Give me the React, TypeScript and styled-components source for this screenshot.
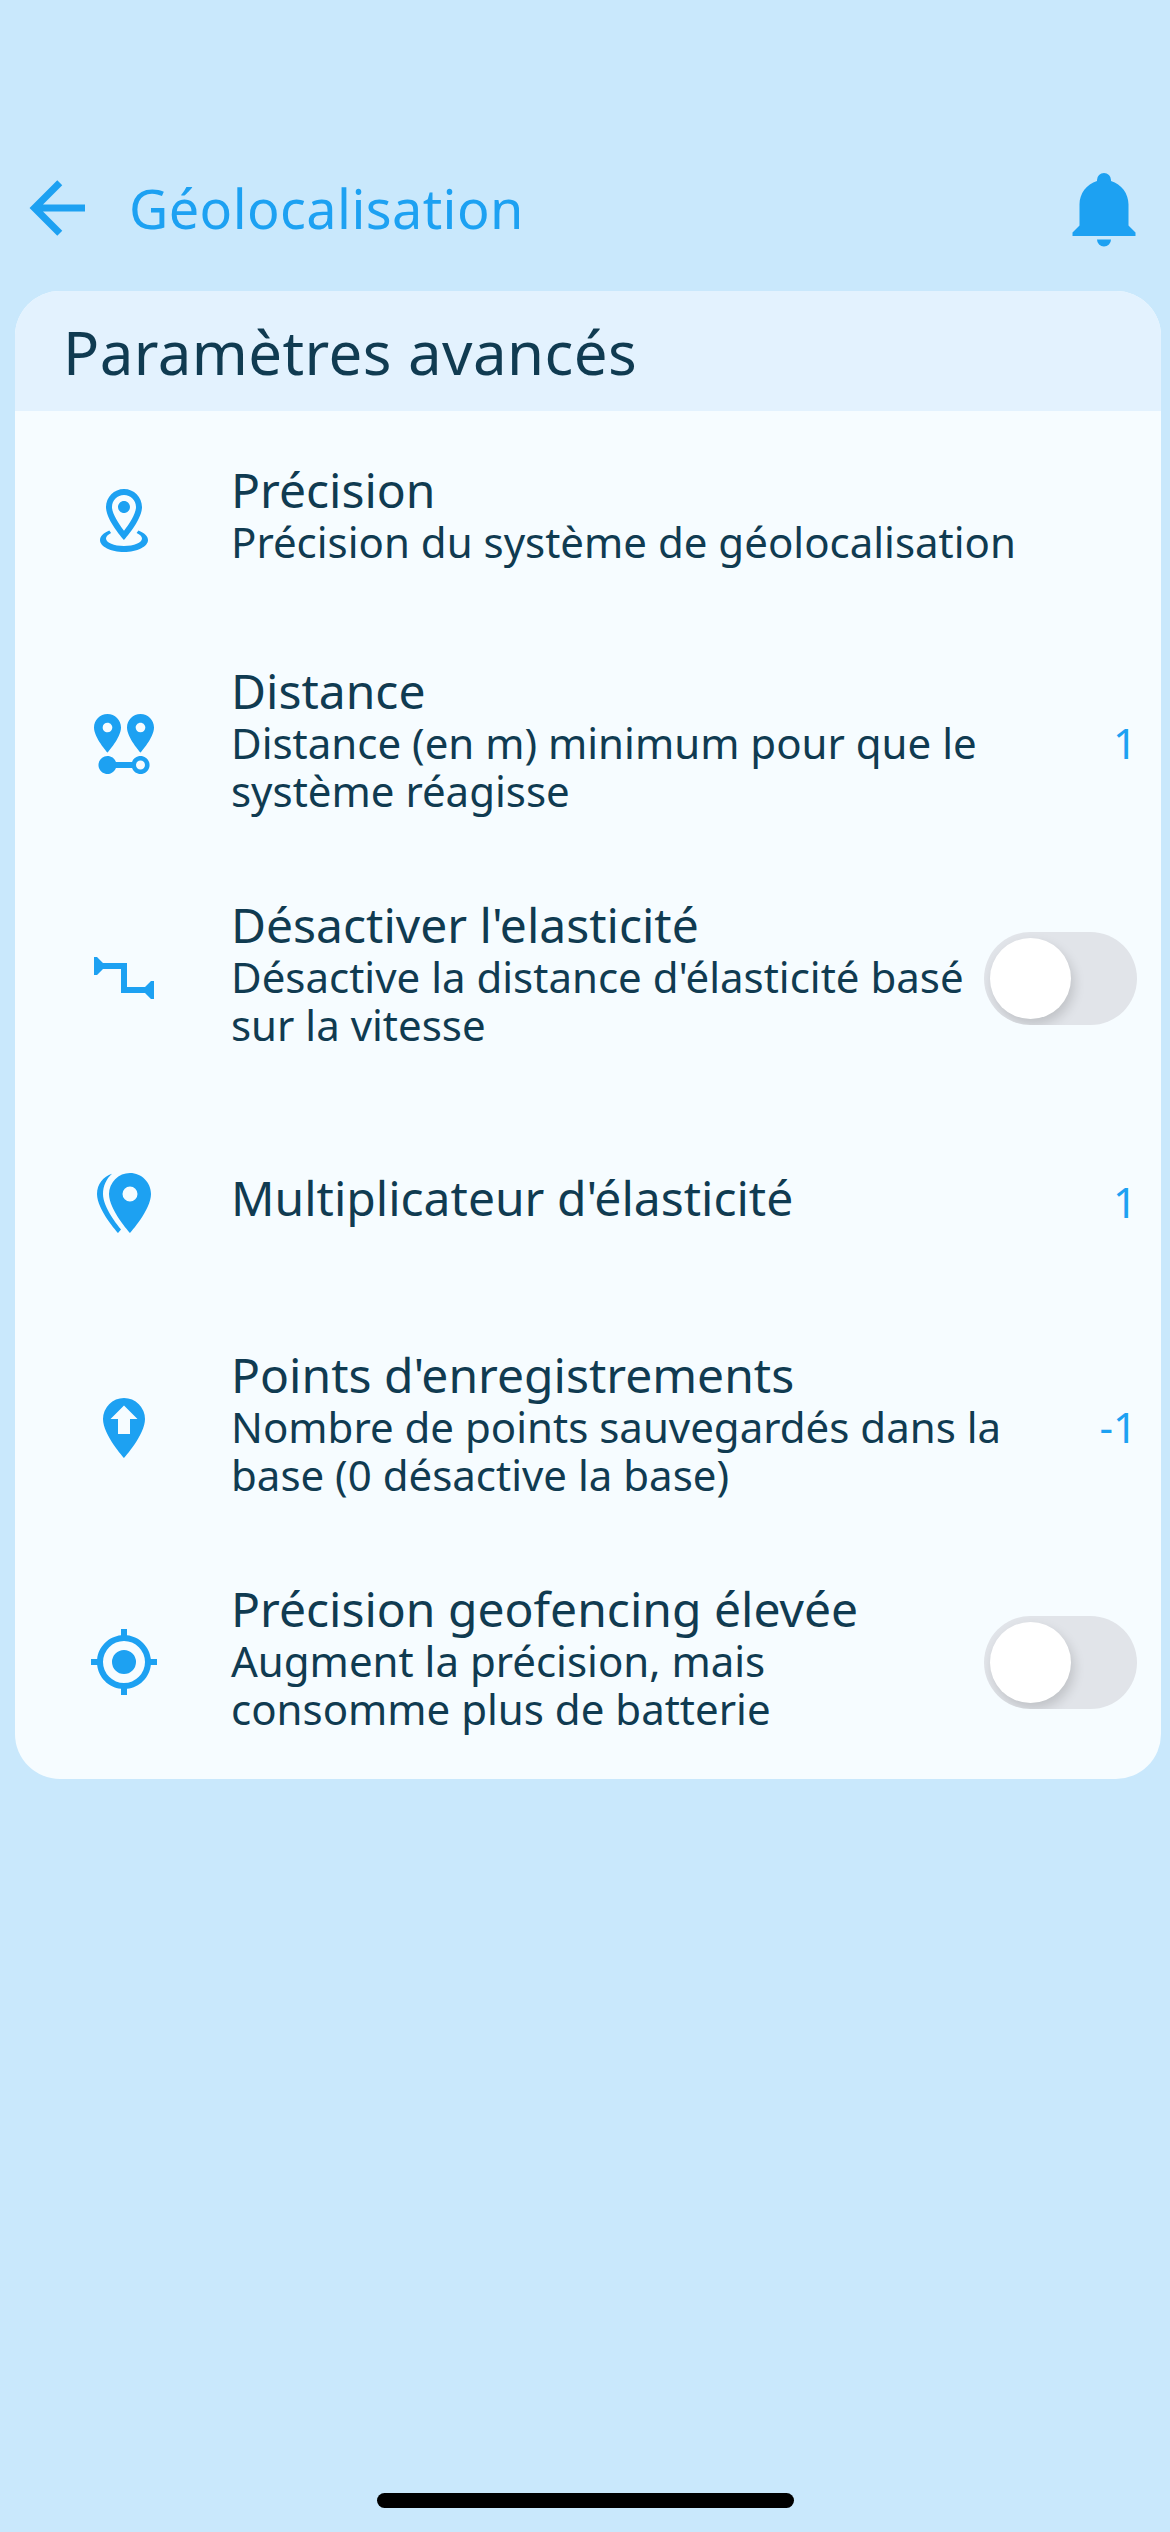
import React from "react";
import styled, { createGlobalStyle } from "styled-components";

const blue = "#1da1f2";
const ink = "#103b51";

const GlobalStyle = createGlobalStyle`
  * { box-sizing: border-box; }
  body { margin: 0; background: #c9e8fc; }
`;

const Screen = styled.div`
  width: 1170px;
  height: 2532px;
  background: #c9e8fc;
  display: flex;
  flex-direction: column;
  font-family: "Noto Sans", "Open Sans", sans-serif;
  color: ${ink};
  overflow: hidden;
`;

const TopBar = styled.header`
  display: flex;
  align-items: center;
  height: 166px;
  margin-top: 125px;
  padding: 0 24px 0 15px;
`;

const Title = styled.h1`
  flex: 1;
  margin: 0 0 0 30px;
  font-size: 54px;
  line-height: 74px;
  font-weight: 400;
  letter-spacing: 0.4px;
  color: ${blue};
`;

const Icon = styled.svg<{ $size: number }>`
  flex: none;
  width: ${(p) => p.$size}px;
  height: ${(p) => p.$size}px;
  fill: ${blue};
`;

const Card = styled.section`
  margin: 0 9px 0 15px;
  border-radius: 45px;
  overflow: hidden;
  background: #f6fcff;
`;

const CardHeader = styled.h2`
  margin: 0;
  height: 120px;
  padding-left: 48px;
  background: #e3f2fe;
  font-size: 60px;
  line-height: 122px;
  font-weight: 400;
  letter-spacing: 0.4px;
`;

const Row = styled.div<{ $tall: boolean }>`
  display: flex;
  align-items: center;
  height: ${(p) => (p.$tall ? 234 : 216)}px;
  padding: 0 24px 0 73px;
`;

const Texts = styled.div`
  flex: 1;
  min-width: 0;
  margin-left: 71px;
  padding-bottom: 11px;
`;

const Label = styled.div`
  font-size: 48px;
  line-height: 57px;
`;

const Detail = styled.div`
  font-size: 42px;
  line-height: 48px;
  white-space: pre-line;
`;

const Value = styled.div`
  padding-bottom: 3px;
  font-size: 42px;
  line-height: 57px;
  color: ${blue};
`;

const Track = styled.div`
  flex: none;
  width: 153px;
  height: 93px;
  margin-top: 1px;
  border-radius: 47px;
  padding: 6px;
  background: #e1e4e9;
  overflow: hidden;
`;

const Knob = styled.div`
  width: 81px;
  height: 81px;
  border-radius: 50%;
  background: #fff;
  box-shadow: 3px 6px 12px rgba(0, 0, 0, 0.15);
`;

const HomeBar = styled.div`
  width: 417px;
  height: 15px;
  margin: auto 0 24px 377px;
  border-radius: 8px;
  background: #000;
`;

const paths = {
  back: "M20,11V13H8L13.5,18.5L12.08,19.92L4.16,12L12.08,4.08L13.5,5.5L8,11H20Z",
  bell: "M21,19V20H3V19L5,17V11C5,7.9 7.03,5.17 10,4.29C10,4.19 10,4.1 10,4A2,2 0 0,1 12,2A2,2 0 0,1 14,4C14,4.1 14,4.19 14,4.29C16.97,5.17 19,7.9 19,11V17L21,19M14,21A2,2 0 0,1 12,23A2,2 0 0,1 10,21",
  precision:
    "M12 4C14.2 4 16 5.8 16 8C16 10.1 13.9 13.5 12 15.9C10.1 13.4 8 10.1 8 8C8 5.8 9.8 4 12 4M12 2C8.7 2 6 4.7 6 8C6 12.5 12 19 12 19S18 12.4 18 8C18 4.7 15.3 2 12 2M12 6C10.9 6 10 6.9 10 8S10.9 10 12 10 14 9.1 14 8 13.1 6 12 6M20 19C20 21.2 16.4 23 12 23S4 21.2 4 19C4 17.7 5.2 16.6 7.1 15.8L7.7 16.7C6.7 17.2 6 17.8 6 18.5C6 19.9 8.7 21 12 21S18 19.9 18 18.5C18 17.8 17.3 17.2 16.2 16.7L16.8 15.8C18.8 16.6 20 17.7 20 19Z",
  distance:
    "M6.5,8.11C5.61,8.11 4.89,7.39 4.89,6.5A1.61,1.61 0 0,1 6.5,4.89C7.39,4.89 8.11,5.61 8.11,6.5V6.5A1.61,1.61 0 0,1 6.5,8.11M6.5,2C4,2 2,4 2,6.5C2,9.87 6.5,14.86 6.5,14.86C6.5,14.86 11,9.87 11,6.5C11,4 9,2 6.5,2M17.5,8.11A1.61,1.61 0 0,1 15.89,6.5C15.89,5.61 16.61,4.89 17.5,4.89C18.39,4.89 19.11,5.61 19.11,6.5A1.61,1.61 0 0,1 17.5,8.11M17.5,2C15,2 13,4 13,6.5C13,9.87 17.5,14.86 17.5,14.86C17.5,14.86 22,9.87 22,6.5C22,4 20,2 17.5,2M17.5,16C16.23,16 15.1,16.8 14.68,18H9.32C8.77,16.44 7.05,15.62 5.5,16.17C3.93,16.72 3.11,18.44 3.66,20C4.22,21.56 5.93,22.38 7.5,21.83C8.35,21.53 9,20.85 9.32,20H14.69C15.24,21.56 16.95,22.38 18.5,21.83C20.08,21.28 20.9,19.56 20.35,18C19.92,16.8 18.78,16 17.5,16M17.5,20.5A1.5,1.5 0 0,1 16,19A1.5,1.5 0 0,1 17.5,17.5A1.5,1.5 0 0,1 19,19A1.5,1.5 0 0,1 17.5,20.5Z",
  elastic: "M2 5H3L5 7H13V15H19L21 13H22V19H21L19 17H11V9H5L3 11H2Z",
  multiple:
    "M14,11.5A2.5,2.5 0 0,0 16.5,9A2.5,2.5 0 0,0 14,6.5A2.5,2.5 0 0,0 11.5,9A2.5,2.5 0 0,0 14,11.5M14,2C17.86,2 21,5.13 21,9C21,14.25 14,22 14,22C14,22 7,14.25 7,9A7,7 0 0,1 14,2M5,9C5,13.5 10.08,19.66 11,20.81L10,22C10,22 3,14.25 3,9C3,5.83 5.11,3.15 8,2.29C6.16,3.94 5,6.33 5,9Z",
  points:
    "M12,2A7,7 0 0,1 19,9C19,14.25 12,22 12,22C12,22 5,14.25 5,9A7,7 0 0,1 12,2M12 4.5L7.5 9H10V14H14V9H16.5L12 4.5Z",
  target:
    "M12,8A4,4 0 0,1 16,12A4,4 0 0,1 12,16A4,4 0 0,1 8,12A4,4 0 0,1 12,8M3.05,13H1V11H3.05C3.5,6.83 6.83,3.5 11,3.05V1H13V3.05C17.17,3.5 20.5,6.83 20.95,11H23V13H20.95C20.5,17.17 17.17,20.5 13,20.95V23H11V20.95C6.83,20.5 3.5,17.17 3.05,13M12,5A7,7 0 0,0 5,12A7,7 0 0,0 12,19A7,7 0 0,0 19,12A7,7 0 0,0 12,5Z",
};

type Glyph = keyof typeof paths;

const GlyphIcon = ({ name, size = 72 }: { name: Glyph; size?: number }) => (
  <Icon $size={size} viewBox="0 0 24 24" aria-hidden>
    <path d={paths[name]} fillRule="evenodd" />
  </Icon>
);

type Setting = {
  icon: Glyph;
  label: string;
  detail?: string;
  value?: string;
  toggle?: boolean;
};

const settings: Setting[] = [
  { icon: "precision", label: "Précision", detail: "Précision du système de géolocalisation" },
  { icon: "distance", label: "Distance", detail: "Distance (en m) minimum pour que le\nsystème réagisse", value: "1" },
  { icon: "elastic", label: "Désactiver l'elasticité", detail: "Désactive la distance d'élasticité basé\nsur la vitesse", toggle: true },
  { icon: "multiple", label: "Multiplicateur d'élasticité", value: "1" },
  { icon: "points", label: "Points d'enregistrements", detail: "Nombre de points sauvegardés dans la\nbase (0 désactive la base)", value: "-1" },
  { icon: "target", label: "Précision geofencing élevée", detail: "Augment la précision, mais\nconsomme plus de batterie", toggle: true },
];

export default function App() {
  return (
    <>
      <GlobalStyle />
      <Screen>
        <TopBar>
          <GlyphIcon name="back" size={84} />
          <Title>Géolocalisation</Title>
          <GlyphIcon name="bell" size={84} />
        </TopBar>
        <Card>
          <CardHeader>Paramètres avancés</CardHeader>
          {settings.map((s) => (
            <Row key={s.label} $tall={!!s.detail?.includes("\n")}>
              <GlyphIcon name={s.icon} />
              <Texts>
                <Label>{s.label}</Label>
                {s.detail && <Detail>{s.detail}</Detail>}
              </Texts>
              {s.value && <Value>{s.value}</Value>}
              {s.toggle && (
                <Track role="switch" aria-checked={false}>
                  <Knob />
                </Track>
              )}
            </Row>
          ))}
        </Card>
        <HomeBar />
      </Screen>
    </>
  );
}
